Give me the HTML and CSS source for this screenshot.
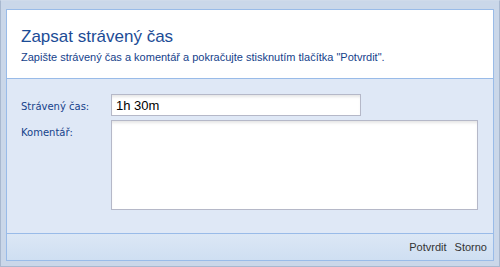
FILE: index.html
```html
<!DOCTYPE html>
<html lang="cs">
<head>
    <meta charset="UTF-8">
    <title>Zapsat strávený čas</title>
    <link rel="stylesheet" href="styles.css">
</head>
<body>

<div class="window">
    <div class="window-inner">

        <!-- Header -->
        <div class="header">
            <h1>Zapsat strávený čas</h1>
            <p>Zapište strávený čas a komentář a pokračujte stisknutím tlačítka "Potvrdit".</p>
        </div>

        <!-- Form -->
        <div class="form">
            <div class="row">
                <label for="spent">Strávený čas:</label>
                <input type="text" id="spent" class="field-time" value="1h 30m">
            </div>
            <div class="row">
                <label for="comment">Komentář:</label>
                <textarea id="comment" class="field-comment"></textarea>
            </div>
        </div>

        <!-- Buttons -->
        <div class="footer">
            <button>Potvrdit</button>
            <button>Storno</button>
        </div>

    </div>
</div>

</body>
</html>
```

FILE: styles.css
```css
html, body {
    margin: 0;
    padding: 0;
}

body {
    font-family: Tahoma, 'DejaVu Sans', sans-serif;
    width: 500px;
    height: 267px;
    overflow: hidden;
}

.window {
    box-sizing: border-box;
    width: 500px;
    height: 267px;
    border: 1px solid #a8b8cf;
    border-top-color: #cfdaea;
    background-color: #cad7e9;
    padding: 8px 5px 5px 5px;
}

.window-inner {
    box-sizing: border-box;
    height: 100%;
    border: 1px solid #99bbe8;
    display: flex;
    flex-direction: column;
}

.header {
    background-color: #fff;
    height: 68px;
    border-bottom: 1px solid #99bbe8;
    padding: 0 14px;
}

.header h1 {
    margin: 0;
    padding-top: 17px;
    font-family: 'Liberation Sans', Arial, sans-serif;
    font-weight: normal;
    font-size: 17px;
    line-height: 20px;
    color: #1c4c96;
}

.header p {
    margin: 4px 0 0 0;
    font-family: 'Liberation Sans', Arial, sans-serif;
    font-size: 11px;
    line-height: 13px;
    color: #15428b;
}

.form {
    flex: 1;
    background-color: #dfe8f6;
    padding: 15px 14px 0 14px;
}

.row {
    display: flex;
    margin-bottom: 4px;
}

.row label {
    width: 90px;
    padding-top: 7px;
    font-size: 10px;
    color: #15428b;
}

.field-time,
.field-comment {
    box-sizing: border-box;
    border: 1px solid #b5b8c8;
    background-color: #fff;
    box-shadow: inset 0 3px 3px -1px #e6e6e6;
    font-family: 'Liberation Sans', Arial, sans-serif;
    font-size: 13px;
    margin: 0;
    outline: none;
}

.field-time {
    width: 250px;
    height: 22px;
    padding: 0 4px;
}

.field-comment {
    width: 367px;
    height: 90px;
    resize: none;
}

.footer {
    height: 26px;
    border-top: 1px solid #99bbe8;
    background: linear-gradient(#dce7f5, #cfdff2);
    display: flex;
    justify-content: flex-end;
    align-items: center;
    gap: 2px;
    padding-right: 3px;
}

.footer button {
    background: none;
    border: none;
    padding: 0 3px;
    font-family: 'Liberation Sans', Arial, sans-serif;
    font-size: 11px;
    color: #333;
    cursor: pointer;
}
```
